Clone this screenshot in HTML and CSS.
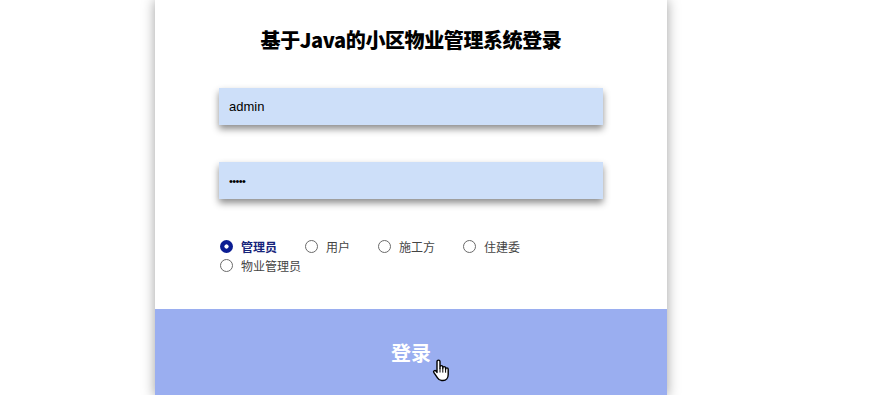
FILE: index.html
```html
<!DOCTYPE html>
<html lang="zh-CN">
<head>
<meta charset="utf-8">
<title>登录</title>
<link rel="stylesheet" href="styles.css">
</head>
<body>
<div class="card">
  <h1 class="title">基于Java的小区物业管理系统登录</h1>
  <form class="form">
    <input class="field" type="text" value="admin">
    <input class="field field-pass" type="password" value="admin">
    <div class="roles">
      <label class="role checked"><input type="radio" name="role" checked><span>管理员</span></label>
      <label class="role"><input type="radio" name="role"><span>用户</span></label>
      <label class="role"><input type="radio" name="role"><span>施工方</span></label>
      <label class="role"><input type="radio" name="role"><span>住建委</span></label>
      <label class="role"><input type="radio" name="role"><span>物业管理员</span></label>
    </div>
  </form>
  <div class="submit">登录</div>
</div>
<svg class="cursor" width="18" height="23" viewBox="0 0 18 23" xmlns="http://www.w3.org/2000/svg">
  <path d="M5 2.6a1.5 1.5 0 0 1 3 0V9.5V8a1.4 1.4 0 0 1 2.8 0v1.6V9a1.4 1.4 0 0 1 2.8 0v1v0.2a1.3 1.3 0 0 1 2.6 0V15.5c0 3.300-2.1 6-5.2 6H9.6c-2 0-3.1-1-4.1-2.6L1.9 13.6a1.3 1.3 0 0 1 2.1-1.6L5 13.4z" fill="#fff" stroke="#000" stroke-width="1.4" stroke-linejoin="round"/>
  <path d="M8 9.5v4M10.8 9.6v4M13.6 10.2v3.5" stroke="#000" stroke-width="1" fill="none"/>
</svg>
</body>
</html>
```
FILE: styles.css
```css
html, body {
  margin: 0;
  padding: 0;
  background: #ffffff;
}

body {
  font-family: "Noto Sans CJK SC", "Noto Sans", sans-serif;
  position: relative;
  height: 395px;
  overflow: hidden;
}

.card {
  width: 512px;
  margin-left: 155px;
  background: #ffffff;
  box-shadow: 0 0 12px rgba(0, 0, 0, 0.38);
  display: flex;
  flex-direction: column;
  padding-top: 26px;
}

.title {
  margin: 0;
  font-size: 20px;
  line-height: 28px;
  font-weight: 900;
  text-align: center;
  color: #000;
  letter-spacing: -0.4px;
}

.form {
  display: flex;
  flex-direction: column;
  padding: 34px 64px 0;
}

.field {
  box-sizing: border-box;
  width: 384px;
  height: 37px;
  border: none;
  outline: none;
  background: #cddff9;
  box-shadow: 0 4px 7px rgba(0, 0, 0, 0.45);
  padding: 0 10px;
  font-family: "Liberation Sans", Arial, sans-serif;
  font-size: 13px;
  color: #000;
  margin: 0;
}

.field-pass {
  margin-top: 37px;
  font-size: 11px;
  letter-spacing: -0.6px;
}

.roles {
  display: flex;
  flex-wrap: wrap;
  column-gap: 28px;
  margin-top: 38px;
  padding-left: 1px;
}

.role {
  display: flex;
  align-items: center;
  height: 19px;
  font-size: 12px;
  color: #444;
}

.role.checked {
  color: #16247a;
  font-weight: 700;
}

.role input {
  appearance: none;
  -webkit-appearance: none;
  box-sizing: border-box;
  width: 13px;
  height: 13px;
  margin: 0 8px 0 0;
  border: 1.3px solid #6a6a6a;
  border-radius: 50%;
  background: #fff;
}

.role input:checked {
  border: none;
  background: radial-gradient(circle, #ffffff 0 1.8px, #0b1d93 2.4px);
}

.submit {
  margin-top: 34px;
  height: 88px;
  line-height: 88px;
  background: #9aaef0;
  color: #ffffff;
  text-align: center;
  font-size: 20px;
  font-weight: 700;
}

.cursor {
  position: absolute;
  left: 432px;
  top: 359px;
}
```
